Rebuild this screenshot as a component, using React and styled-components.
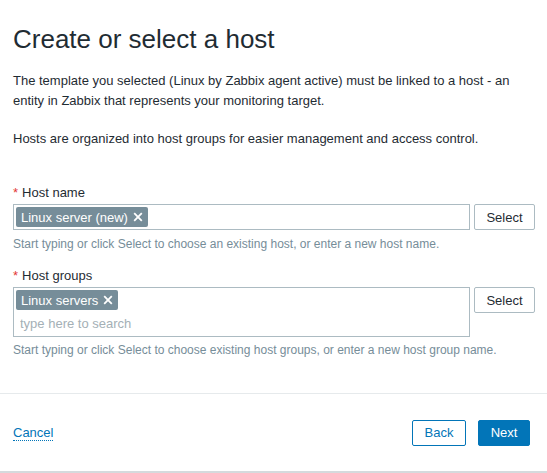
import React from "react";
import styled, { createGlobalStyle } from "styled-components";

const Global = createGlobalStyle`
  html, body { margin: 0; padding: 0; background: #ffffff; }
  body { font-family: "Liberation Sans", Arial, sans-serif; color: #1f2c33; }
  * { box-sizing: border-box; }
`;

const Page = styled.div`
  width: 547px;
  height: 473px;
  display: flex;
  flex-direction: column;
  border-bottom: 2px solid #d5dadd;
`;

const Body = styled.div`
  padding: 24px 12px 0 13px;
  flex: 1;
  display: flex;
  flex-direction: column;
`;

const Title = styled.h1`
  margin: 0;
  font-size: 26px;
  font-weight: normal;
  line-height: 30px;
  color: #1f2c33;
`;

const Para = styled.p`
  margin: ${(p) => p.$top}px 0 0;
  font-size: 13px;
  line-height: 20px;
  color: #1f2c33;
`;

const Field = styled.div`
  margin-top: ${(p) => p.$top}px;
  display: flex;
  flex-direction: column;
`;

const Label = styled.label`
  font-size: 13px;
  line-height: 18px;
  color: #1f2c33;
  margin-bottom: 2px;
  &::before {
    content: "*";
    color: #e33734;
    margin-right: 4px;
  }
`;

const Row = styled.div`
  display: flex;
  align-items: flex-start;
  gap: 4px;
`;

const MultiBox = styled.div`
  flex: 1;
  min-height: 26px;
  border: 1px solid #acbbc2;
  background: #fff;
  padding: 2px 2px 0;
  display: flex;
  flex-direction: column;
`;

const Tags = styled.div`
  display: flex;
  gap: 4px;
`;

const Tag = styled.span`
  display: inline-flex;
  align-items: center;
  height: 20px;
  padding: 0 5px 0 5px;
  background: #768d99;
  color: #fff;
  border-radius: 2px;
  font-size: 13px;
  gap: 5px;
`;

const SearchInput = styled.input`
  border: none;
  outline: none;
  background: transparent;
  font-family: "Liberation Sans", Arial, sans-serif;
  font-size: 13px;
  height: 26px;
  padding: 0 4px;
  color: #1f2c33;
  &::placeholder { color: #a4b0b6; }
`;

const SelectButton = styled.button`
  width: 61px;
  height: 26px;
  border: 1px solid #acbbc2;
  border-radius: 2px;
  background: #fff;
  color: #1f2c33;
  font-family: "Liberation Sans", Arial, sans-serif;
  font-size: 13px;
  padding: 0;
`;

const Hint = styled.div`
  margin-top: ${(p) => p.$top}px;
  font-size: 12px;
  line-height: 16px;
  color: #768d99;
`;

const Footer = styled.div`
  border-top: 1px solid #e6eaec;
  height: 78px;
  padding: 0 17px 0 13px;
  display: flex;
  align-items: center;
  gap: 12px;
`;

const CancelLink = styled.a`
  font-size: 13px;
  color: #0275b8;
  text-decoration: none;
  border-bottom: 1px dotted #0275b8;
  line-height: 15px;
  margin-right: auto;
  cursor: pointer;
`;

const FooterButton = styled.button`
  height: 26px;
  padding: 0;
  border-radius: 2px;
  font-family: "Liberation Sans", Arial, sans-serif;
  font-size: 13px;
  border: 1px solid #0275b8;
  background: ${(p) => (p.$primary ? "#0275b8" : "#fff")};
  color: ${(p) => (p.$primary ? "#fff" : "#0275b8")};
  width: ${(p) => p.$w}px;
`;

const Cross = () => (
  <svg width="10" height="10" viewBox="0 0 10 10">
    <path d="M1.2 1.2 L8.8 8.8 M8.8 1.2 L1.2 8.8" stroke="#fff" strokeWidth="1.8" strokeLinecap="butt" />
  </svg>
);

export default function App() {
  return (
    <>
      <Global />
      <Page>
        <Body>
          <Title>Create or select a host</Title>
          <Para $top={17}>
            The template you selected (Linux by Zabbix agent active) must be linked to a host - an entity in Zabbix that represents your monitoring target.
          </Para>
          <Para $top={18}>Hosts are organized into host groups for easier management and access control.</Para>

          <Field $top={35}>
            <Label>Host name</Label>
            <Row>
              <MultiBox>
                <Tags>
                  <Tag>
                    Linux server (new) <Cross />
                  </Tag>
                </Tags>
              </MultiBox>
              <SelectButton>Select</SelectButton>
            </Row>
            <Hint $top={6}>Start typing or click Select to choose an existing host, or enter a new host name.</Hint>
          </Field>

          <Field $top={15}>
            <Label>Host groups</Label>
            <Row>
              <MultiBox>
                <Tags>
                  <Tag>
                    Linux servers <Cross />
                  </Tag>
                </Tags>
                <SearchInput placeholder="type here to search" />
              </MultiBox>
              <SelectButton>Select</SelectButton>
            </Row>
            <Hint $top={5}>Start typing or click Select to choose existing host groups, or enter a new host group name.</Hint>
          </Field>
        </Body>
        <Footer>
          <CancelLink>Cancel</CancelLink>
          <FooterButton $w={54}>Back</FooterButton>
          <FooterButton $primary $w={52}>Next</FooterButton>
        </Footer>
      </Page>
    </>
  );
}
